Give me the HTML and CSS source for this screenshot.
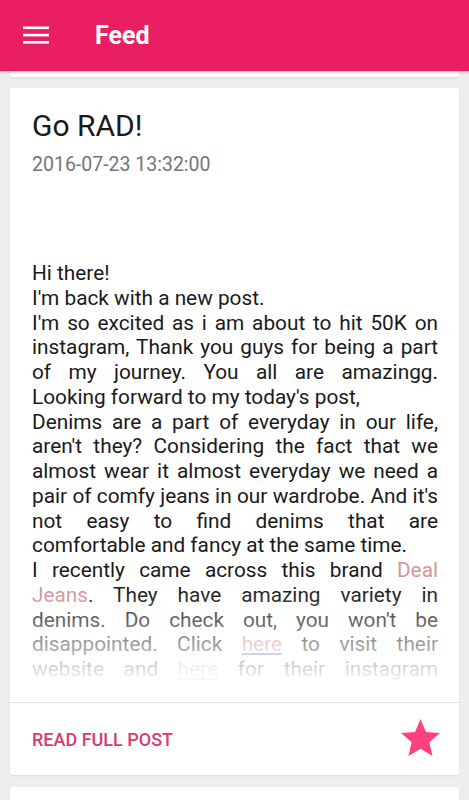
FILE: index.html
```html
<!DOCTYPE html>
<html lang="en">

<head>
    <meta charset="UTF-8">
    <meta name="viewport" content="width=device-width, initial-scale=1.0">
    <title>Feed</title>
    <link rel="stylesheet" href="styles.css">
</head>

<body>
    <header class="app-bar">
        <button class="menu-btn" aria-label="Menu">
            <svg width="26" height="18" viewBox="0 0 26 18">
                <rect x="0" y="0.5" width="26" height="2.6" fill="#fff" />
                <rect x="0" y="7.8" width="26" height="2.6" fill="#fff" />
                <rect x="0" y="15" width="26" height="2.6" fill="#fff" />
            </svg>
        </button>
        <h1 class="app-title">Feed</h1>
    </header>

    <main class="feed">
        <div class="card card-stub"></div>

        <article class="card post">
            <div class="post-head">
                <h2 class="post-title">Go RAD!</h2>
                <div class="post-date">2016-07-23 13:32:00</div>
            </div>
            <div class="post-media"></div>
            <div class="post-body">
                <p>Hi there!<br>I'm back with a new post.<br>I'm so excited as i am about to hit 50K on instagram, Thank you guys for being a part of my journey. You all are amazingg. Looking forward to my today's post,</p>
                <p>Denims are a part of everyday in our life, aren't they? Considering the fact that we almost wear it almost everyday we need a pair of comfy jeans in our wardrobe. And it's not easy to find denims that are comfortable and fancy at the same time.</p>
                <p>I recently came across this brand <a class="brand" href="#">Deal Jeans</a>. They have amazing variety in denims. Do check out, you won't be disappointed. Click <a class="link" href="#">here</a> to visit their website and <a class="link" href="#">here</a> for their instagram account. Hope you like my post and do share your thoughts in the comments below.</p>
            </div>
            <div class="post-foot">
                <a class="read-more" href="#">READ FULL POST</a>
                <svg class="star" width="39" height="37" viewBox="2 2 20 19">
                    <path d="M12 17.27L18.18 21l-1.64-7.03L22 9.24l-7.19-.61L12 2 9.19 8.63 2 9.24l5.46 4.73L5.82 21z" fill="#ff4081" />
                </svg>
            </div>
        </article>

        <article class="card card-next"></article>
    </main>
</body>

</html>
```

FILE: styles.css
```css
* {
    padding: 0;
    margin: 0;
    box-sizing: border-box;
}

body {
    background-color: #eeeeee;
    font-family: Roboto, "Noto Sans", sans-serif;
    color: #212121;
    overflow: hidden;
}

.app-bar {
    position: relative;
    z-index: 2;
    height: 71px;
    background-color: #e91e63;
    display: flex;
    align-items: center;
    padding-left: 23px;
    box-shadow: 0 1px 3px rgba(0, 0, 0, 0.25);
}

.menu-btn {
    background: none;
    border: none;
    display: flex;
    margin-top: -1px;
}

.app-title {
    color: #fff;
    font-size: 25px;
    font-weight: 700;
    margin-left: 46px;
}

.feed {
    padding: 0 10px;
}

.card {
    background-color: #fff;
    border-radius: 3px;
    box-shadow: 0 1px 2px rgba(0, 0, 0, 0.08);
}

.card-stub {
    height: 6px;
    border-radius: 0 0 3px 3px;
    margin-bottom: 11px;
}

.post {
    margin-bottom: 12px;
}

.post-head {
    padding: 20px 21px 0 22px;
}

.post-title {
    font-size: 30px;
    font-weight: 400;
    color: #1a1a1a;
}

.post-date {
    margin-top: 10px;
    font-size: 19.5px;
    color: #757575;
}

.post-media {
    height: 85px;
}

.post-body {
    position: relative;
    margin: 0 21px 20px 22px;
    height: 421px;
    overflow: hidden;
    font-size: 20.8px;
    line-height: 24.75px;
    text-align: justify;
    color: #1a1a1a;
}

.post-body::after {
    content: "";
    position: absolute;
    left: 0;
    right: 0;
    bottom: 0;
    height: 92px;
    background: linear-gradient(rgba(255, 255, 255, 0), rgba(255, 255, 255, 0.97));
}

.brand {
    color: #d4959a;
    text-decoration: none;
}

.link {
    color: #d4959a;
    text-decoration: underline;
    text-decoration-color: #7b6fd6;
}

.post-foot {
    border-top: 1px solid #e0e0e0;
    height: 73px;
    display: flex;
    align-items: center;
    justify-content: space-between;
    padding: 0 19px 0 22px;
}

.read-more {
    color: #d63a72;
    font-size: 18px;
    font-weight: 500;
    text-decoration: none;
}

.star {
    margin-top: -3px;
}

.card-next {
    height: 40px;
}
```
